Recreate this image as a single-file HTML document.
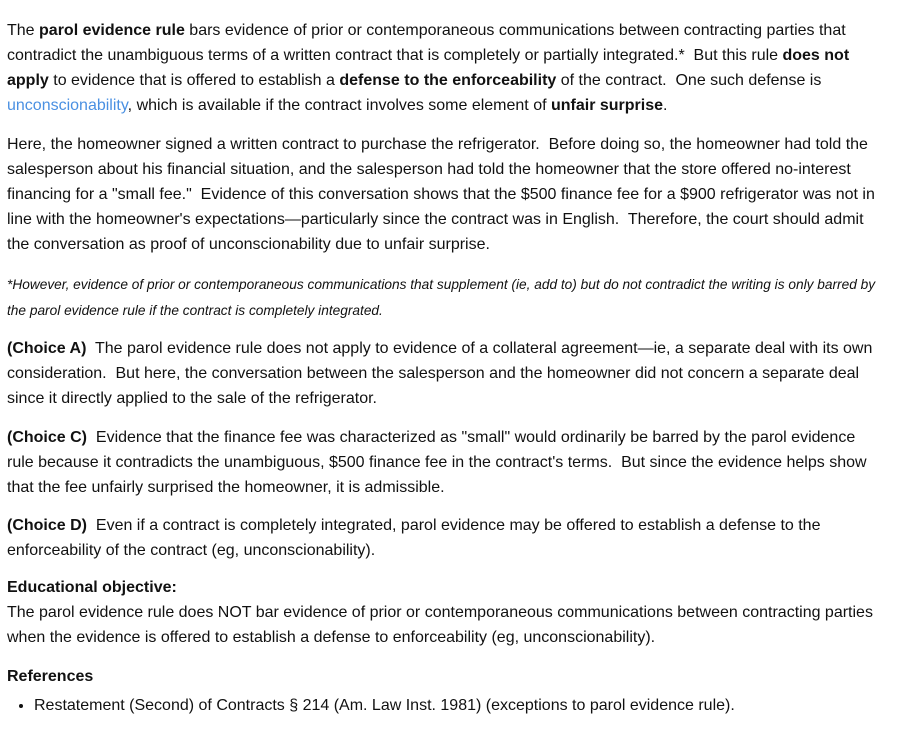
<!DOCTYPE html>
<html><head><meta charset="utf-8"><style>
body{margin:0;background:#fff;font-family:"Liberation Sans",Arial,sans-serif;font-size:16px;color:#111;width:900px;height:735px;overflow:hidden}
.w{position:absolute;left:7px;white-space:nowrap;line-height:25px}
p{margin:0}
.f{font-size:13.7px;font-style:italic;line-height:26px}
a{color:#4a90e2;text-decoration:none}
ul{margin:0;padding-left:26px}
</style></head><body>
<div class="w" style="top:18px"><p>The <b>parol evidence rule</b> bars evidence of prior or contemporaneous communications between contracting parties that<br>contradict the unambiguous terms of a written contract that is completely or partially integrated.*&nbsp; But this rule <b>does not</b><br><b>apply</b> to evidence that is offered to establish a <b>defense to the enforceability</b> of the contract.&nbsp; One such defense is<br><a>unconscionability</a>, which is available if the contract involves some element of <b>unfair surprise</b>.</p></div>
<div class="w" style="top:132px"><p>Here, the homeowner signed a written contract to purchase the refrigerator.&nbsp; Before doing so, the homeowner had told the<br>salesperson about his financial situation, and the salesperson had told the homeowner that the store offered no-interest<br>financing for a "small fee."&nbsp; Evidence of this conversation shows that the $500 finance fee for a $900 refrigerator was not in<br>line with the homeowner's expectations—particularly since the contract was in English.&nbsp; Therefore, the court should admit<br>the conversation as proof of unconscionability due to unfair surprise.</p></div>
<div class="w f" style="top:272px"><p>*However, evidence of prior or contemporaneous communications that supplement (ie, add to) but do not contradict the writing is only barred by<br>the parol evidence rule if the contract is completely integrated.</p></div>
<div class="w" style="top:336px"><p><b>(Choice A)</b>&nbsp; The parol evidence rule does not apply to evidence of a collateral agreement—ie, a separate deal with its own<br>consideration.&nbsp; But here, the conversation between the salesperson and the homeowner did not concern a separate deal<br>since it directly applied to the sale of the refrigerator.</p></div>
<div class="w" style="top:425px"><p><b>(Choice C)</b>&nbsp; Evidence that the finance fee was characterized as "small" would ordinarily be barred by the parol evidence<br>rule because it contradicts the unambiguous, $500 finance fee in the contract's terms.&nbsp; But since the evidence helps show<br>that the fee unfairly surprised the homeowner, it is admissible.</p></div>
<div class="w" style="top:513px"><p><b>(Choice D)</b>&nbsp; Even if a contract is completely integrated, parol evidence may be offered to establish a defense to the<br>enforceability of the contract (eg, unconscionability).</p></div>
<div class="w" style="top:575px"><p><b>Educational objective:</b><br>The parol evidence rule does NOT bar evidence of prior or contemporaneous communications between contracting parties<br>when the evidence is offered to establish a defense to enforceability (eg, unconscionability).</p></div>
<div class="w" style="top:664px"><p><b>References</b></p></div>
<div class="w" style="top:693px;left:8px"><ul><li>Restatement (Second) of Contracts § 214 (Am. Law Inst. 1981) (exceptions to parol evidence rule).</li></ul></div>
</body></html>
